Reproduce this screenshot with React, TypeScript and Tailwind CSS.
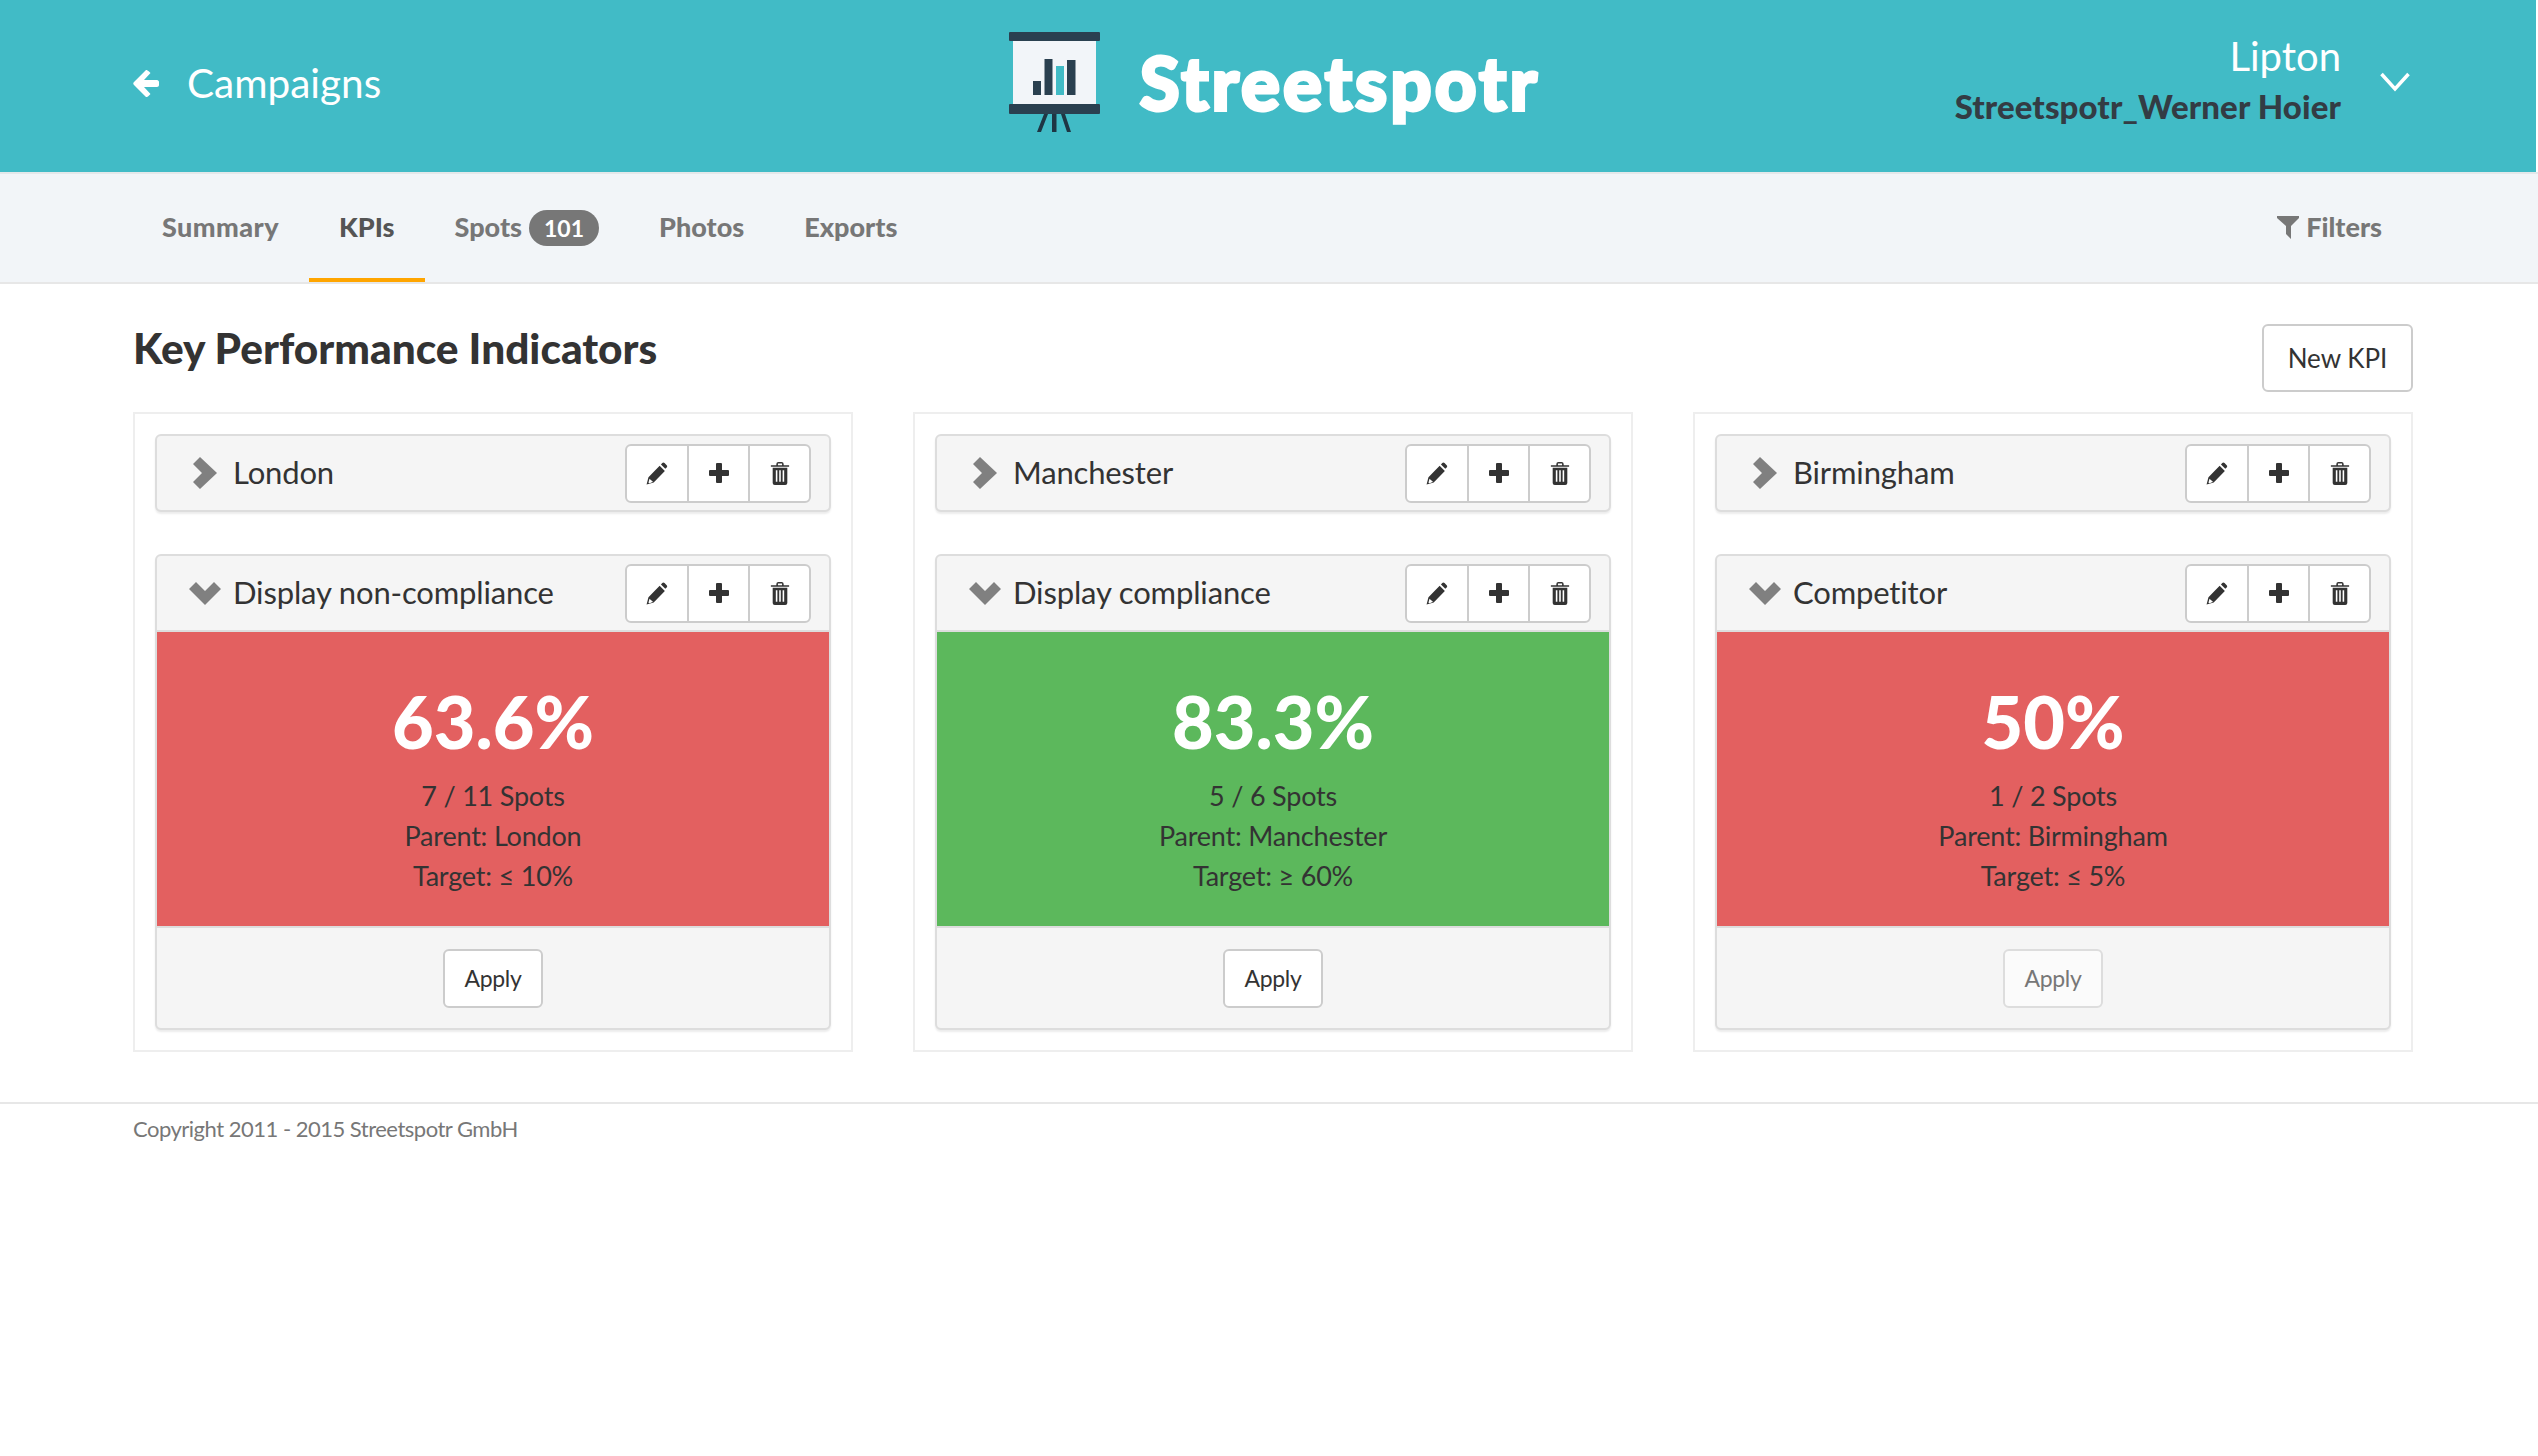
import { ReactNode } from "react";

const kpis = [
  {
    parent: "London",
    title: "Display non-compliance",
    value: "63.6%",
    spots: "7 / 11 Spots",
    target: "Target: ≤ 10%",
    color: "bg-[#e36060]",
    disabled: false,
  },
  {
    parent: "Manchester",
    title: "Display compliance",
    value: "83.3%",
    spots: "5 / 6 Spots",
    target: "Target: ≥ 60%",
    color: "bg-[#5cb85c]",
    disabled: false,
  },
  {
    parent: "Birmingham",
    title: "Competitor",
    value: "50%",
    spots: "1 / 2 Spots",
    target: "Target: ≤ 5%",
    color: "bg-[#e36060]",
    disabled: true,
  },
];

function PencilIcon() {
  return (
    <svg className="mr-[2px]" width="23" height="23" viewBox="0 0 21 22" fill="#333">
      <path d="M1 21.500 2.800 14.500 13.500 3.500l5 5L7.800 19.500z M3.800 16l-1 3.800 1.300.6 3-1.600z" fillRule="evenodd" />
      <path d="M14.800 2.300 16 1c.7-.7 1.500-.7 2.200 0l2 2c.7.7.7 1.500 0 2.200l-1.300 1.300z" />
    </svg>
  );
}

function PlusIcon() {
  return (
    <svg width="20" height="20" viewBox="0 0 20 20" fill="#333">
      <path d="M7 1a1 1 0 0 1 1-1h4a1 1 0 0 1 1 1v6h6a1 1 0 0 1 1 1v4a1 1 0 0 1-1 1h-6v6a1 1 0 0 1-1 1H8a1 1 0 0 1-1-1v-6H1a1 1 0 0 1-1-1V8a1 1 0 0 1 1-1h6z" />
    </svg>
  );
}

function TrashIcon() {
  return (
    <svg width="20" height="23" viewBox="0 0 19 22" fill="#333">
      <path d="M6 3V2a2 2 0 0 1 2-2h3a2 2 0 0 1 2 2v1h5a1 1 0 0 1 0 1.500H1A1 1 0 0 1 1 3zm1.500 0h4V1.500h-4z" fillRule="evenodd" />
      <path
        d="M2.500 5.500h14V20a2 2 0 0 1-2 2h-10a2 2 0 0 1-2-2zM5.500 8v11h1.500V8zm3.250 0v11h1.500V8zM12 8v11h1.500V8z"
        fillRule="evenodd"
      />
    </svg>
  );
}

function ChevronRight() {
  return (
    <svg width="24" height="32" viewBox="0 0 24 32" fill="#808080">
      <path d="M7 0 24 16 7 32 0 25 9 16 0 7z" />
    </svg>
  );
}

function ChevronDown() {
  return (
    <svg width="32" height="23" viewBox="0 0 32 23" fill="#808080">
      <path d="M0 7 7 0l9 9 9-9 7 7-16 16z" />
    </svg>
  );
}

function LogoIcon() {
  return (
    <svg width="91" height="100" viewBox="0 0 91 100">
      <rect x="4" y="9" width="83" height="63" fill="#f2f5f9" />
      <rect x="0" y="0" width="91" height="9" rx="1" fill="#2a4050" />
      <rect x="0" y="72" width="91" height="10" rx="1" fill="#2a4050" />
      <path d="M35 82h4l-7 18h-4z M43 82h4.500v18H43z M52 82h4l6 18h-4z" fill="#1e3644" />
      <rect x="24" y="49" width="8" height="14" fill="#2a4050" />
      <rect x="35.500" y="27" width="8" height="36" fill="#2a4050" />
      <rect x="47" y="34" width="8" height="29" fill="#41bbc6" />
      <rect x="58" y="28" width="8.500" height="35" fill="#2a4050" />
    </svg>
  );
}

function ActionGroup() {
  return (
    <div className="flex h-[59px] w-[186px] rounded-[6px] border-2 border-[#ccc] bg-white">
      <div className="flex w-[62px] items-center justify-center border-r-2 border-[#ccc]">
        <PencilIcon />
      </div>
      <div className="flex w-[61px] items-center justify-center border-r-2 border-[#ccc]">
        <PlusIcon />
      </div>
      <div className="flex flex-1 items-center justify-center">
        <TrashIcon />
      </div>
    </div>
  );
}

function CardHeader({ icon, title }: { icon: ReactNode; title: string }) {
  return (
    <div className="flex h-[74px] items-center justify-between pl-[31px] pr-[18px]">
      <div className="flex items-center">
        <div className="flex w-[33px] justify-center">{icon}</div>
        <span className="mb-[2px] ml-[12px] text-[31px] tracking-[-0.15px] text-[#333]">{title}</span>
      </div>
      <ActionGroup />
    </div>
  );
}

function Panel({ kpi }: { kpi: (typeof kpis)[number] }) {
  return (
    <div className="border-2 border-[#eee] p-[20px]">
      <div className="mb-[42px] rounded-[6px] border-2 border-[#ddd] bg-[#f5f5f5] shadow-[0_2px_2px_rgba(0,0,0,0.08)]">
        <CardHeader icon={<ChevronRight />} title={kpi.parent} />
      </div>
      <div className="overflow-hidden rounded-[6px] border-2 border-[#ddd] bg-[#f5f5f5] shadow-[0_2px_2px_rgba(0,0,0,0.08)]">
        <CardHeader icon={<ChevronDown />} title={kpi.title} />
        <div className={`h-[298px] border-y-2 border-b-[#ddd] border-t-[#ddd] pt-[47px] text-center ${kpi.color}`}>
          <div className="text-[72px] font-black leading-[84px] text-white">{kpi.value}</div>
          <div className="mt-[13px] text-[27px] leading-[40px] tracking-[-0.2px] text-[#333]">
            <div>{kpi.spots}</div>
            <div>Parent: {kpi.parent}</div>
            <div>{kpi.target}</div>
          </div>
        </div>
        <div className="flex h-[100px] items-center justify-center">
          <button
            className={`h-[59px] w-[100px] rounded-[6px] border-2 text-[23px] tracking-[-0.3px] ${
              kpi.disabled ? "border-[#ddd] bg-[#fbfbfb] text-[#777]" : "border-[#ccc] bg-white text-[#333]"
            }`}
          >
            Apply
          </button>
        </div>
      </div>
    </div>
  );
}

const tabs = ["Summary", "KPIs", "Spots", "Photos", "Exports"];

export default function App() {
  return (
    <div className="min-h-[1456px] bg-white font-['Lato','Liberation_Sans',sans-serif]">
      <header className="mr-[2px] grid h-[172px] grid-cols-[1fr_auto_1fr] items-center bg-[#41bbc6] pl-[133px] pr-[126px]">
        <div className="mb-[6px] flex items-center">
          <svg width="26" height="27" viewBox="0 0 26 27" fill="white">
            <path d="M13 0c1 0 2 .6 3 1.500l1.500 1.500L11 10h13c1 0 2 1 2 2v3c0 1-1 2-2 2H11l6.500 7-1.500 1.500c-1 1-2.500 2-3 1.500L1 15c-1-1-1-2 0-3z" />
          </svg>
          <span className="ml-[28px] text-[40.5px] text-white">Campaigns</span>
        </div>
        <div className="mb-[8px] ml-[6px] flex items-center">
          <LogoIcon />
          <span className="ml-[40px] text-[72px] font-bold leading-none tracking-[3.6px] text-white [-webkit-text-stroke:4px_white]">
            Streetspotr
          </span>
        </div>
        <div className="mb-[10px] flex items-center justify-end">
          <div className="text-right">
            <div className="text-[40px] leading-[50px] text-white">Lipton</div>
            <div className="text-[33px] font-black leading-[50px] tracking-[0.1px] text-[#333c44]">Streetspotr_Werner Hoier</div>
          </div>
          <svg className="ml-[39px] mt-[2px]" width="30" height="20" viewBox="0 0 30 20" fill="none" stroke="white" strokeWidth="3.500">
            <path d="M1.500 2 15 17 28.500 2" />
          </svg>
        </div>
      </header>

      <nav className="flex h-[112px] items-stretch justify-between border-y-2 border-t-[#e4e8ea] border-b-[#e7e7e7] bg-[#f2f5f8] pl-[132px] pr-[126px]">
        <div className="flex">
          {tabs.map((tab) => (
            <div
              key={tab}
              className={`flex items-center border-b-4 px-[30px] pt-[3px] text-[27px] font-black ${
                tab === "KPIs" ? "border-[#ffa500] text-[#555]" : "border-transparent text-[#777]"
              } ${tab === "Summary" ? "tracking-[0.45px]" : ""}`}
            >
              {tab}
              {tab === "Spots" && (
                <span className="ml-[7px] rounded-[20px] bg-[#777] px-[15px] py-[6px] text-[23px] font-bold leading-[24px] text-white">
                  101
                </span>
              )}
            </div>
          ))}
        </div>
        <div className="flex items-center border-b-4 border-transparent px-[30px] pt-[3px] text-[27px] font-black text-[#777]">
          <svg width="22" height="23" viewBox="0 0 22 23" fill="#777">
            <path d="M0 0h22v2l-8 8v13l-5-5v-8L0 2z" />
          </svg>
          <span className="ml-[7px]">Filters</span>
        </div>
      </nav>

      <main className="px-[133px] pr-[125px]">
        <div className="flex h-[128px] items-start justify-between pt-[40px]">
          <h1 className="-mt-[2px] text-[42.4px] font-black leading-[52px] text-[#333]">Key Performance Indicators</h1>
          <button className="h-[68px] w-[151px] rounded-[6px] border-2 border-[#ccc] bg-white text-[26px] text-[#333]">
            New KPI
          </button>
        </div>
        <div className="grid grid-cols-3 gap-[60px]">
          {kpis.map((kpi) => (
            <Panel key={kpi.parent} kpi={kpi} />
          ))}
        </div>
      </main>

      <footer className="mt-[50px] border-t-2 border-[#e7e7e7] px-[133px] pt-[9px]">
        <p className="text-[22px] leading-[32px] tracking-[-0.5px] text-[#777]">Copyright 2011 - 2015 Streetspotr GmbH</p>
      </footer>
    </div>
  );
}
